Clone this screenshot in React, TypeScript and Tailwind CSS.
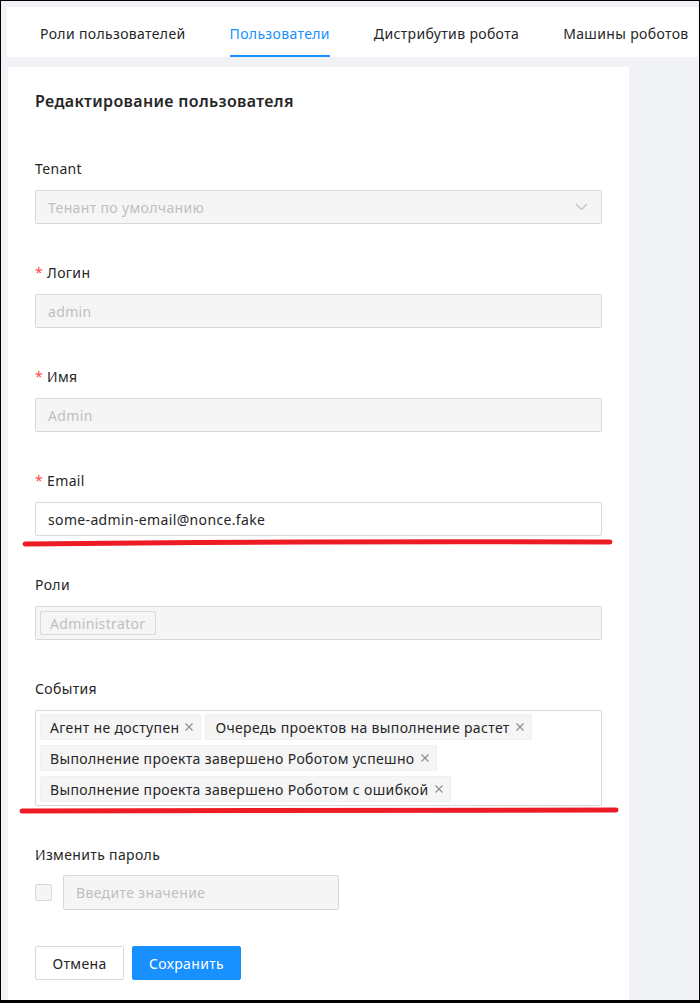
import type { ReactNode } from "react";

const tabs = ["Роли пользователей", "Пользователи", "Дистрибутив робота", "Машины роботов"];

const events = [
  "Агент не доступен",
  "Очередь проектов на выполнение растет",
  "Выполнение проекта завершено Роботом успешно",
  "Выполнение проекта завершено Роботом с ошибкой",
];

function Field({
  label,
  required = false,
  children,
}: {
  label: string;
  required?: boolean;
  children: ReactNode;
}) {
  return (
    <div className="mb-[38px]">
      <div className="mb-[10px] flex h-[22px] items-center text-[14px] leading-[22px] text-[#262626]">
        {required ? <span className="mr-[4px] text-[#ff4d4f]">*</span> : null}
        {label}
      </div>
      {children}
    </div>
  );
}

function DisabledInput({ value, chevron = false }: { value: string; chevron?: boolean }) {
  return (
    <div className="flex h-[34px] items-center justify-between rounded-[2px] border border-[#d9d9d9] bg-[#f5f5f5] pl-[12px] pr-[12px] text-[14px] text-[#bfbfbf]">
      <span>{value}</span>
      {chevron ? (
        <svg width="13" height="8" viewBox="0 0 13 8" fill="none" className="mr-[1px]">
          <path d="M1 1l5.5 5.5L12 1" stroke="#bfbfbf" strokeWidth="1.2" />
        </svg>
      ) : null}
    </div>
  );
}

function EventTag({ text }: { text: string }) {
  return (
    <span className="flex h-[26px] items-center rounded-[2px] border border-[#f0f0f0] bg-[#f5f5f5] pl-[9px] pr-[6px] text-[14px] text-[#262626]">
      {text}
      <svg width="10" height="10" viewBox="0 0 10 10" className="ml-[5px]">
        <path d="M1.5 1.5l7 7M8.5 1.5l-7 7" stroke="#8c8c8c" strokeWidth="1.1" />
      </svg>
    </span>
  );
}

export default function App() {
  return (
    <div
      className="relative h-[1003px] overflow-hidden border border-b-[3px] border-black bg-[#f0f2f5] tracking-[0.35px]"
      style={{ fontFamily: '"Noto Sans", "Open Sans", sans-serif' }}
    >
      <div className="ml-[6px] mr-px mt-[6px] flex h-[50px] gap-[44px] bg-white pl-[33px]">
        {tabs.map((tab) => (
          <div
            key={tab}
            className={`flex h-[50px] items-center whitespace-nowrap border-b-2 pt-[4px] text-[14px] ${
              tab === "Пользователи"
                ? "border-[#1890ff] text-[#1890ff]"
                : "border-transparent text-[#262626]"
            }`}
          >
            {tab}
          </div>
        ))}
      </div>

      <div className="ml-[7px] mt-[10px] h-[960px] w-[621px] bg-white px-[27px] pt-[22px]">
        <h2 className="mb-[45px] text-[16px] font-semibold leading-[24px] text-[#262626]">
          Редактирование пользователя
        </h2>

        <Field label="Tenant">
          <DisabledInput value="Тенант по умолчанию" chevron />
        </Field>

        <Field label="Логин" required>
          <DisabledInput value="admin" />
        </Field>

        <Field label="Имя" required>
          <DisabledInput value="Admin" />
        </Field>

        <Field label="Email" required>
          <div className="flex h-[34px] items-center rounded-[2px] border border-[#d9d9d9] bg-white pl-[12px] text-[14px] text-[#262626]">
            some-admin-email@nonce.fake
          </div>
        </Field>

        <Field label="Роли">
          <div className="flex h-[34px] items-center rounded-[2px] border border-[#d9d9d9] bg-[#f5f5f5] pl-[4px]">
            <span className="flex h-[24px] items-center rounded-[2px] border border-[#d9d9d9] bg-[#f5f5f5] px-[9px] text-[14px] text-[#bfbfbf]">
              Administrator
            </span>
          </div>
        </Field>

        <Field label="События">
          <div className="flex flex-wrap gap-x-[4px] gap-y-[5px] rounded-[2px] border border-[#d9d9d9] bg-white px-[4px] py-[3px] pr-[60px]">
            {events.map((item) => (
              <EventTag key={item} text={item} />
            ))}
          </div>
        </Field>

        <div className="mb-[36px]">
          <div className="mb-[9px] h-[22px] text-[14px] leading-[22px] text-[#262626]">
            Изменить пароль
          </div>
          <div className="flex items-center gap-[11px]">
            <span className="h-[17px] w-[17px] rounded-[2px] border border-[#d9d9d9] bg-[#f5f5f5]" />
            <div className="flex h-[35px] w-[276px] items-center rounded-[2px] border border-[#d9d9d9] bg-[#f5f5f5] pl-[12px] text-[14px] text-[#bfbfbf]">
              Введите значение
            </div>
          </div>
        </div>

        <div className="flex gap-[8px]">
          <button className="h-[34px] w-[89px] rounded-[2px] border border-[#d9d9d9] bg-white text-[14px] text-[#262626]">
            Отмена
          </button>
          <button className="h-[34px] w-[109px] rounded-[2px] border border-[#1890ff] bg-[#1890ff] text-[14px] text-white">
            Сохранить
          </button>
        </div>
      </div>

      <svg
        className="pointer-events-none absolute left-0 top-0"
        width="700"
        height="1003"
        viewBox="0 0 700 1003"
      >
        <path
          d="M24 543 Q 300 540 609 541"
          stroke="#ed1c24"
          strokeWidth="5"
          strokeLinecap="round"
          fill="none"
        />
        <path
          d="M21 810 Q 300 809 615 809"
          stroke="#ed1c24"
          strokeWidth="5"
          strokeLinecap="round"
          fill="none"
        />
      </svg>
    </div>
  );
}
